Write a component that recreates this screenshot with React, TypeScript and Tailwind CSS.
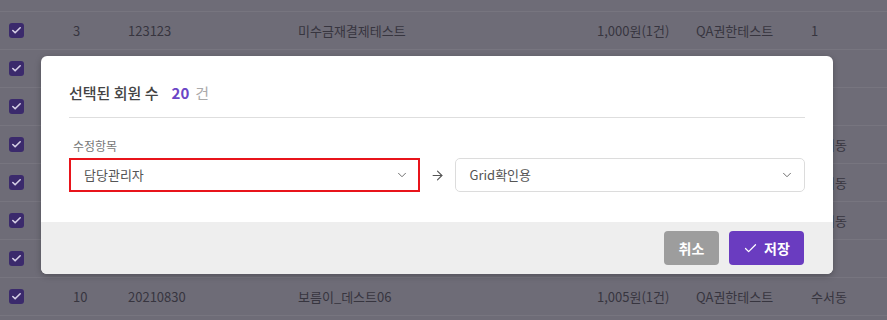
import { ChevronDown, ArrowRight, Check } from "lucide-react";

type Row = {
  no: string;
  id: string;
  name: string;
  amount: string;
  group: string;
  area: string;
};

// rows behind the dialog keep only what shows around it
const ROWS: Row[] = [
  { no: "", id: "", name: "", amount: "", group: "", area: "" },
  { no: "3", id: "123123", name: "미수금재결제테스트", amount: "1,000원(1건)", group: "QA권한테스트", area: "1" },
  { no: "", id: "", name: "", amount: "", group: "", area: "" },
  { no: "", id: "", name: "", amount: "", group: "", area: "" },
  { no: "", id: "", name: "", amount: "", group: "", area: "수서동" },
  { no: "", id: "", name: "", amount: "", group: "", area: "수서동" },
  { no: "", id: "", name: "", amount: "", group: "", area: "수서동" },
  { no: "", id: "", name: "", amount: "", group: "", area: "" },
  { no: "10", id: "20210830", name: "보름이_데스트06", amount: "1,005원(1건)", group: "QA권한테스트", area: "수서동" },
];

function RowCheck() {
  return (
    <span className="flex h-[15px] w-[15px] items-center justify-center rounded-[3px] bg-[#3b2a6c]">
      <Check className="h-[11px] w-[11px] text-[#d6d0e6]" strokeWidth={3.5} />
    </span>
  );
}

function Select({ value, highlighted }: { value: string; highlighted?: boolean }) {
  return (
    <div
      className={
        highlighted
          ? "flex h-[34px] flex-1 items-center justify-between border-2 border-[#e8141b] bg-white pl-[13px] pr-[9px]"
          : "flex h-[34px] flex-1 items-center justify-between rounded-[5px] border border-[#dcdcdc] bg-white pl-[14px] pr-[10px]"
      }
    >
      <span className="text-[13px] text-[#555]">{value}</span>
      <ChevronDown className="h-[14px] w-[14px] text-[#666]" strokeWidth={1.6} />
    </div>
  );
}

export default function App() {
  return (
    <div className="relative h-[320px] w-[887px] overflow-hidden bg-[#6e6c77] font-['Noto_Sans_CJK_KR','Noto_Sans',sans-serif] text-[13px] text-[#37353f]">
      <div className="-mt-[26px]">
        {ROWS.map((row, i) => (
          <div
            key={i}
            className="flex h-[38px] items-center border-b border-[#77757f]"
          >
            <div className="w-[72px] pl-[9px]">
              <RowCheck />
            </div>
            <div className="w-[56px] pl-[1px]">{row.no}</div>
            <div className="w-[170px]">{row.id}</div>
            <div className="w-[299px]">{row.name}</div>
            <div className="w-[99px]">{row.amount}</div>
            <div className="w-[115px]">{row.group}</div>
            <div className="flex-1">{row.area}</div>
          </div>
        ))}
      </div>

      {/* modal */}
      <div className="absolute left-[41px] top-[56px] flex h-[218px] w-[792px] flex-col overflow-hidden rounded-[6px] bg-white shadow-[0_2px_6px_rgba(0,0,0,0.25)]">
        <div className="flex-1 px-[28px] pt-[26px]">
          <div className="flex h-[22px] items-center text-[15px] font-medium text-[#444]">
            <span>선택된 회원 수</span>
            <span className="ml-[13px] font-bold text-[#6b46c6]">20</span>
            <span className="ml-[6px] font-normal text-[#aaa]">건</span>
          </div>
          <div className="mt-[13px] border-b border-[#dedede]" />
          <div className="mt-[19px] pl-[4px] text-[12px] leading-[18px] text-[#777]">
            수정항목
          </div>
          <div className="mt-[3px] flex items-center">
            <Select value="담당관리자" highlighted />
            <div className="flex w-[35px] justify-center">
              <ArrowRight className="h-[15px] w-[15px] text-[#555]" strokeWidth={1.8} />
            </div>
            <Select value="Grid확인용" />
          </div>
        </div>
        <div className="flex h-[52px] items-center justify-end gap-[10px] bg-[#eeeeee] pr-[29px]">
          <button className="h-[34px] w-[55px] rounded-[4px] bg-[#9d9d9d] text-[14px] font-bold text-white">
            취소
          </button>
          <button className="flex h-[34px] w-[75px] items-center justify-center gap-[6px] rounded-[4px] bg-[#6a3cc0] text-[14px] font-bold text-white">
            <Check className="h-[15px] w-[15px]" strokeWidth={2} />
            저장
          </button>
        </div>
      </div>
    </div>
  );
}
